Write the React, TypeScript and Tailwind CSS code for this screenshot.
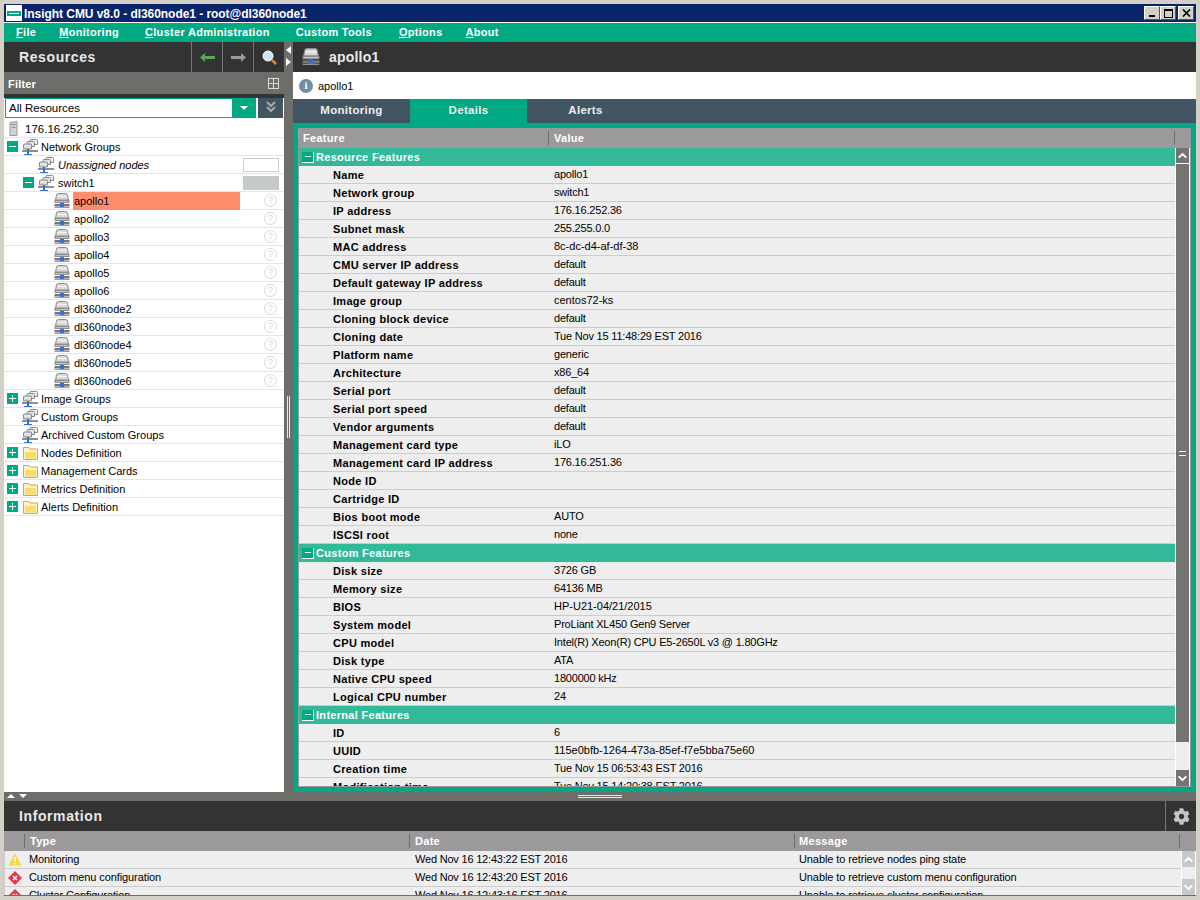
import { ChevronDown, ChevronUp } from "lucide-react";
import { FaCog } from "react-icons/fa";

const font = "font-['Liberation_Sans',Arial,sans-serif]";

function ServerIcon({ size = 16 }: { size?: number }) {
  return (
    <svg width={size} height={size} viewBox="0 0 16 16" className="shrink-0">
      <path d="M1.5 7 L2.5 2 Q2.8 0.5 4.5 0.5 H11.5 Q13.2 0.5 13.5 2 L14.5 7 Z" fill="#d9d9d9" stroke="#8a8a8a" />
      <rect x="3" y="3" width="10" height="1" fill="#f4f4f4" />
      <rect x="0.5" y="7" width="15" height="3" fill="#8d8d8d" />
      <rect x="1.5" y="8" width="13" height="1" fill="#c4c4c4" />
      <rect x="0.5" y="11" width="15" height="2.5" fill="#777777" />
      <rect x="6" y="10" width="4" height="5" fill="#2f6fe0" />
      <rect x="0.5" y="14" width="15" height="1" fill="#9a9a9a" />
    </svg>
  );
}

function GroupIcon() {
  return (
    <svg width="16" height="16" viewBox="0 0 16 16" className="shrink-0">
      <path d="M8 4 V1.5 Q8 0.5 9 0.5 H14.5 Q15.5 0.5 15.5 1.5 V5.5 H12" fill="#eeeeee" stroke="#8a8a8a" />
      <path d="M5 6 V3.5 Q5 2.5 6 2.5 H11.5 Q12.5 2.5 12.5 3.5 V7.5 H9" fill="#e2e2e2" stroke="#8a8a8a" />
      <path d="M1.5 10 V6 Q1.5 5 2.5 5 H8.5 Q9.5 5 9.5 6 V10 Z" fill="#d6d6d6" stroke="#8a8a8a" />
      <rect x="2.5" y="6.5" width="6" height="1" fill="#f6f6f6" />
      <rect x="0" y="11" width="16" height="2" fill="#8f8f8f" />
      <rect x="5" y="10" width="2" height="6" fill="#2f6fe0" />
      <rect x="2" y="15" width="8" height="1" fill="#2f6fe0" />
    </svg>
  );
}

function FolderIcon() {
  return (
    <svg width="15" height="14" viewBox="0 0 15 14" className="shrink-0">
      <path d="M0.5 3 V1.5 H6 L7 3 H14.5 V13.5 H0.5 Z" fill="#fff3c4" stroke="#e0a14a" />
      <rect x="2" y="6" width="11" height="6.5" fill="#fbdc6a" />
    </svg>
  );
}

function Toggle({ open }: { open: boolean }) {
  return (
    <span className="flex h-[11px] w-[11px] shrink-0 items-center justify-center bg-[#01a982]">
      <span className="relative block h-[7px] w-[7px]">
        <span className="absolute left-0 top-[3px] h-px w-[7px] bg-white" />
        {!open && <span className="absolute left-[3px] top-0 h-[7px] w-px bg-white" />}
      </span>
    </span>
  );
}

function Help() {
  return (
    <span className="ml-auto mr-[7px] flex h-[13px] w-[13px] shrink-0 items-center justify-center rounded-full border border-[#d8d8d8] text-[9px] leading-none text-[#d0d0d0]">
      ?
    </span>
  );
}

function TreeRow({ children }: { children: React.ReactNode }) {
  return <div className="flex h-[18px] items-center border-b border-[#e4e4e4]">{children}</div>;
}

function TopGroup({ label, open, folder }: { label: string; open?: boolean; folder?: boolean }) {
  return (
    <TreeRow>
      <span className="w-[3px]" />
      {open === undefined ? <span className="w-[11px]" /> : <Toggle open={open} />}
      <span className="ml-1 flex w-[19px] justify-start">{folder ? <span className="ml-[1px]"><FolderIcon /></span> : <GroupIcon />}</span>
      <span className="pt-[2px]">{label}</span>
    </TreeRow>
  );
}

function NodeRow({ name, selected }: { name: string; selected?: boolean }) {
  return (
    <TreeRow>
      <span className="ml-[50px] mr-[3px]">
        <ServerIcon />
      </span>
      <span className={selected ? "flex h-[18px] w-[167px] items-center bg-[#ff8d6d] pl-px pt-[2px]" : "pl-px pt-[2px]"}>{name}</span>
      <Help />
    </TreeRow>
  );
}

const sections: { title: string; rows: [string, string][] }[] = [
  {
    title: "Resource Features",
    rows: [
      ["Name", "apollo1"],
      ["Network group", "switch1"],
      ["IP address", "176.16.252.36"],
      ["Subnet mask", "255.255.0.0"],
      ["MAC address", "8c-dc-d4-af-df-38"],
      ["CMU server IP address", "default"],
      ["Default gateway IP address", "default"],
      ["Image group", "centos72-ks"],
      ["Cloning block device", "default"],
      ["Cloning date", "Tue Nov 15 11:48:29 EST 2016"],
      ["Platform name", "generic"],
      ["Architecture", "x86_64"],
      ["Serial port", "default"],
      ["Serial port speed", "default"],
      ["Vendor arguments", "default"],
      ["Management card type", "iLO"],
      ["Management card IP address", "176.16.251.36"],
      ["Node ID", ""],
      ["Cartridge ID", ""],
      ["Bios boot mode", "AUTO"],
      ["ISCSI root", "none"],
    ],
  },
  {
    title: "Custom Features",
    rows: [
      ["Disk size", "3726 GB"],
      ["Memory size", "64136 MB"],
      ["BIOS", "HP-U21-04/21/2015"],
      ["System model", "ProLiant XL450 Gen9 Server"],
      ["CPU model", "Intel(R) Xeon(R) CPU E5-2650L v3 @ 1.80GHz"],
      ["Disk type", "ATA"],
      ["Native CPU speed", "1800000 kHz"],
      ["Logical CPU number", "24"],
    ],
  },
  {
    title: "Internal Features",
    rows: [
      ["ID", "6"],
      ["UUID", "115e0bfb-1264-473a-85ef-f7e5bba75e60"],
      ["Creation time", "Tue Nov 15 06:53:43 EST 2016"],
      ["Modification time", "Tue Nov 15 14:20:38 EST 2016"],
    ],
  },
];

const messages: [string, string, string, "warn" | "error"][] = [
  ["Monitoring", "Wed Nov 16 12:43:22 EST 2016", "Unable to retrieve nodes ping state", "warn"],
  ["Custom menu configuration", "Wed Nov 16 12:43:20 EST 2016", "Unable to retrieve custom menu configuration", "error"],
  ["Cluster Configuration", "Wed Nov 16 12:43:16 EST 2016", "Unable to retrieve cluster configuration", "error"],
];

function StatusIcon({ kind }: { kind: "warn" | "error" }) {
  if (kind === "warn") {
    return (
      <svg width="14" height="13" viewBox="0 0 14 13" className="shrink-0">
        <path d="M7 0.5 L13.5 12.5 H0.5 Z" fill="#f8d640" />
        <rect x="6.4" y="4" width="1.4" height="5" fill="#fff" />
        <rect x="6.4" y="10" width="1.4" height="1.4" fill="#fff" />
      </svg>
    );
  }
  return (
    <svg width="14" height="14" viewBox="0 0 14 14" className="shrink-0">
      <path d="M7 0 L14 7 L7 14 L0 7 Z" fill="#e8384f" />
      <path d="M5 5 L9 9 M9 5 L5 9" stroke="#fff" strokeWidth="1.5" />
    </svg>
  );
}

function MenuItem({ first, rest, className }: { first: string; rest: string; className: string }) {
  return (
    <span className={`font-bold text-white ${className}`}>
      <span className="underline underline-offset-1">{first}</span>
      {rest}
    </span>
  );
}

export default function App() {
  return (
    <div className={`${font} flex h-[900px] w-[1200px] flex-col overflow-hidden border-x-4 border-t-4 border-[#d4d0c8] text-[11px] text-black`}>
      <div className="flex h-[18px] shrink-0 items-center bg-[#0a246a] pl-[2px] pr-[2px] text-white">
        <span className="mr-[2px] flex h-[16px] w-[16px] items-center justify-center bg-white">
          <span className="h-[5px] w-[14px] border-2 border-[#01a982]" />
        </span>
        <span className="pt-[2px] text-[12px] font-bold tracking-[-0.05px]">Insight CMU v8.0 - dl360node1 - root@dl360node1</span>
        <div className="ml-auto flex items-center">
          <span className="flex h-[14px] w-[16px] items-end justify-center border border-t-white border-l-white border-r-[#555] border-b-[#555] bg-[#d4d0c8] pb-[2px]"><span className="h-[2px] w-[6px] bg-black" /></span>
          <span className="flex h-[14px] w-[16px] items-center justify-center border border-t-white border-l-white border-r-[#555] border-b-[#555] bg-[#d4d0c8]"><span className="h-[9px] w-[9px] border border-t-2 border-black" /></span>
          <span className="ml-[2px] flex h-[14px] w-[16px] items-center justify-center border border-t-white border-l-white border-r-[#555] border-b-[#555] bg-[#d4d0c8]">
            <svg width="9" height="8" viewBox="0 0 9 8"><path d="M1 0.5 L8 7.5 M8 0.5 L1 7.5" stroke="#000" strokeWidth="1.6" /></svg>
          </span>
        </div>
      </div>
      <div className="mt-px flex h-[19px] shrink-0 items-center bg-[#01a982] pl-3 tracking-[0.3px]">
        <MenuItem first="F" rest="ile" className="" />
        <MenuItem first="M" rest="onitoring" className="ml-[23px]" />
        <MenuItem first="C" rest="luster Administration" className="ml-[26px]" />
        <MenuItem first="" rest="Custom Tools" className="ml-[26px]" />
        <MenuItem first="O" rest="ptions" className="ml-[27px]" />
        <MenuItem first="A" rest="bout" className="ml-[23px]" />
      </div>

      <div className="flex min-h-0 flex-1">
        <div className="flex w-[280px] shrink-0 flex-col bg-white">
          <div className="flex h-[30px] shrink-0 items-center bg-[#333333]">
            <span className="ml-[15px] text-[14px] font-bold tracking-[0.6px] text-[#e8e8e8]">Resources</span>
            <div className="ml-auto flex h-full">
              <span className="flex w-[31px] items-center justify-center border-l border-[#777]">
                <svg width="15" height="9" viewBox="0 0 15 9"><path d="M0 4.5 L5 0 V3 H15 V6 H5 V9 Z" fill="#5aa55a" /></svg>
              </span>
              <span className="flex w-[31px] items-center justify-center border-l border-[#777]">
                <svg width="15" height="9" viewBox="0 0 15 9"><path d="M15 4.5 L10 0 V3 H0 V6 H10 V9 Z" fill="#9a9a9a" /></svg>
              </span>
              <span className="flex w-[31px] items-center justify-center border-l border-[#777]">
                <svg width="15" height="15" viewBox="0 0 15 15">
                  <path d="M10 10 L14 14" stroke="#d8893a" strokeWidth="2.5" />
                  <circle cx="6" cy="6" r="5" fill="#cfe3f5" stroke="#ffffff" />
                </svg>
              </span>
            </div>
          </div>
          <div className="flex h-[22px] shrink-0 items-center justify-between bg-[#6d6e6a] pl-[4px] pr-[5px] font-bold text-white">
            <span className="pt-[2px] tracking-[0.2px]">Filter</span>
            <span className="relative h-[11px] w-[11px] border border-[#ddd]">
              <span className="absolute left-0 top-[4px] h-px w-[9px] bg-[#ddd]" />
              <span className="absolute left-[4px] top-0 h-[9px] w-px bg-[#ddd]" />
            </span>
          </div>
          <div className="flex h-[4px] shrink-0 bg-[#333333]" />
          <div className="flex h-[20px] shrink-0 items-stretch gap-[2px] pl-px pr-px">
            <div className="flex flex-1 border border-[#01a982]">
              <span className="flex flex-1 items-center pl-[3px] pt-[2px] text-[11.5px]">All Resources</span>
              <span className="flex w-[23px] items-center justify-center bg-[#01a982]">
                <span className="h-0 w-0 border-x-4 border-t-4 border-x-transparent border-t-white" />
              </span>
            </div>
            <span className="flex w-[25px] items-center justify-center bg-[#425563]">
              <svg width="10" height="14" viewBox="0 0 10 14">
                <path d="M1 1 L5 5 L9 1 M1 6 L5 10 L9 6" fill="none" stroke="#a8a8a8" strokeWidth="2" />
              </svg>
            </span>
          </div>
          <div className="mt-[2px] shrink-0 text-[11px]">
            <TreeRow>
              <svg width="11" height="15" viewBox="0 0 11 15" className="ml-[4px] mr-[6px] shrink-0">
                <path d="M2 1.5 L9 0.5 V14.5 H2 Z" fill="#d0d0d0" stroke="#999" />
                <rect x="3.5" y="3" width="4" height="1" fill="#888" />
                <rect x="3.5" y="6" width="4" height="1" fill="#6ab06a" />
              </svg>
              <span className="pt-[2px] text-[11.5px]">176.16.252.30</span>
            </TreeRow>
            <TopGroup label="Network Groups" open />
            <TreeRow>
              <span className="ml-[34px] mr-[4px]"><GroupIcon /></span>
              <span className="pt-[2px] italic">Unassigned nodes</span>
              <span className="ml-auto mr-[5px] h-[14px] w-[36px] border border-[#ccc] bg-white" />
            </TreeRow>
            <TreeRow>
              <span className="ml-[19px] mr-[4px]"><Toggle open /></span>
              <GroupIcon />
              <span className="ml-[4px] pt-[2px]">switch1</span>
              <span className="ml-auto mr-[5px] h-[14px] w-[36px] bg-[#c6c9ca]" />
            </TreeRow>
            <NodeRow name="apollo1" selected />
            {["apollo2", "apollo3", "apollo4", "apollo5", "apollo6", "dl360node2", "dl360node3", "dl360node4", "dl360node5", "dl360node6"].map((n) => (
              <NodeRow key={n} name={n} />
            ))}
            <TopGroup label="Image Groups" open={false} />
            <TopGroup label="Custom Groups" />
            <TopGroup label="Archived Custom Groups" />
            <TopGroup label="Nodes Definition" open={false} folder />
            <TopGroup label="Management Cards" open={false} folder />
            <TopGroup label="Metrics Definition" open={false} folder />
            <TopGroup label="Alerts Definition" open={false} folder />
          </div>
        </div>

        <div className="relative flex w-[9px] shrink-0 flex-col items-center bg-[#6d6e6a] pt-[4px] text-white">
          <span className="h-0 w-0 border-y-[4px] border-r-[5px] border-y-transparent border-r-white" />
          <span className="mt-[4px] h-0 w-0 border-y-[4px] border-l-[5px] border-y-transparent border-l-white" />
          <span className="absolute top-[354px] h-[42px] w-[3px] border-x border-[#e8e8e8]" />
        </div>

        <div className="flex min-w-0 flex-1 flex-col">
          <div className="flex h-[30px] shrink-0 items-center bg-[#333333] pl-[9px]">
            <ServerIcon size={18} />
            <span className="ml-[9px] text-[14px] font-bold tracking-[0.2px] text-[#e8e8e8]">apollo1</span>
          </div>
          <div className="flex h-[27px] shrink-0 items-center bg-white pl-[6px]">
            <span className="flex h-[14px] w-[14px] items-center justify-center rounded-full bg-[#6f8ea8] font-['Liberation_Serif',serif] text-[11px] font-bold leading-none text-white">i</span>
            <span className="ml-[5px] pt-[2px]">apollo1</span>
          </div>
          <div className="flex h-[24px] shrink-0 bg-[#425563] text-[11.5px] font-bold tracking-[0.3px] text-[#eeeeee]">
            <span className="flex w-[117px] items-center justify-center">Monitoring</span>
            <span className="flex w-[117px] items-center justify-center bg-[#01a982]">Details</span>
            <span className="flex w-[117px] items-center justify-center">Alerts</span>
          </div>
          <div className="flex min-h-0 flex-1 flex-col bg-[#01a982] p-[5px]">
            <div className="flex h-[20px] shrink-0 items-center bg-[#9b999b] font-bold leading-[14px] tracking-[0.3px] text-white">
              <span className="w-[250px] pl-[5px]">Feature</span>
              <span className="h-[14px] border-l border-[#6d6e6a] pl-[5px]">Value</span>
              <span className="ml-auto mr-[16px] h-[14px] border-l border-[#6d6e6a]" />
            </div>
            <div className="flex min-h-0 flex-1 overflow-hidden border-x border-b border-x-[#9b999b] border-b-[#9b999b] bg-[#eeeeee]">
              <div className="min-w-0 flex-1 overflow-hidden">
                {sections.map((s) => (
                  <div key={s.title}>
                    <div className="flex h-[18px] items-center bg-[#32b99a] pl-[3px] font-bold tracking-[0.3px] text-white">
                      <span className="mr-[2px] flex h-[11px] w-[12px] items-center justify-center border-b border-r border-white bg-[#01a982]">
                        <span className="h-px w-[6px] bg-white" />
                      </span>
                      {s.title}
                    </div>
                    {s.rows.map(([k, v]) => (
                      <div key={k} className="flex h-[18px] items-center border-b border-[#cccccc]">
                        <span className="w-[255px] pl-[34px] pt-[2px] font-bold tracking-[0.3px]">{k}</span>
                        <span className={v.includes("-") && !v.includes(" ") ? "tracking-normal" : "tracking-[-0.2px]"}>{v}</span>
                      </div>
                    ))}
                  </div>
                ))}
              </div>
              <div className="flex w-[15px] shrink-0 flex-col border-x border-white bg-[#eeeeee]">
                <span className="flex h-[16px] shrink-0 items-center justify-center border-b border-white bg-[#737570] text-white">
                  <ChevronUp size={13} strokeWidth={3.5} />
                </span>
                <span className="flex h-[578px] shrink-0 items-center justify-center bg-[#737570]">
                  <span className="h-[5px] w-[7px] border-y border-white" />
                </span>
                <span className="flex-1" />
                <span className="flex h-[16px] shrink-0 items-center justify-center bg-[#737570] text-white">
                  <ChevronDown size={13} strokeWidth={3.5} />
                </span>
              </div>
            </div>
          </div>
        </div>
      </div>

      <div className="relative flex h-[9px] shrink-0 items-center justify-center bg-[#6d6e6a]">
        <span className="absolute left-[3px] top-[2px] h-0 w-0 border-x-[4px] border-b-[4px] border-x-transparent border-b-white" />
        <span className="absolute left-[15px] top-[2px] h-0 w-0 border-x-[4px] border-t-[4px] border-x-transparent border-t-white" />
        <span className="h-[3px] w-[44px] border-y border-[#e8e8e8]" />
      </div>
      <div className="flex h-[30px] shrink-0 items-center bg-[#333333] pl-[15px]">
        <span className="text-[14px] font-bold tracking-[0.6px] text-[#e8e8e8]">Information</span>
        <span className="ml-auto flex h-full w-[31px] items-center justify-center border-l border-[#777] text-[#c4c4c4]">
          <FaCog size={17} />
        </span>
      </div>
      <div className="flex h-[20px] shrink-0 items-center bg-[#9b999b] font-bold leading-[14px] tracking-[0.3px] text-white">
        <span className="h-[14px] w-[21px] border-r border-[#6d6e6a]" />
        <span className="h-[14px] w-[385px] border-r border-[#6d6e6a] pl-[5px]">Type</span>
        <span className="h-[14px] w-[385px] border-r border-[#6d6e6a] pl-[5px]">Date</span>
        <span className="h-[14px] w-[385px] border-r border-[#6d6e6a] pl-[4px]">Message</span>
      </div>
      <div className="flex h-[44px] shrink-0 overflow-hidden border-l border-[#cccccc] bg-[#eeeeee]">
        <div className="min-w-0 flex-1">
          {messages.map(([type, date, msg, kind]) => (
            <div key={type} className="flex h-[18px] items-center border-b border-[#cccccc] tracking-[-0.1px]">
              <span className="flex w-[24px] shrink-0 justify-center pr-[4px]"><StatusIcon kind={kind} /></span>
              <span className="w-[386px] shrink-0">{type}</span>
              <span className="w-[384px] shrink-0 tracking-[-0.2px]">{date}</span>
              <span>{msg}</span>
            </div>
          ))}
        </div>
        <div className="flex w-[15px] shrink-0 flex-col border-x border-white">
          <span className="flex h-[16px] items-center justify-center bg-[#c6c9ca] text-white"><ChevronUp size={13} strokeWidth={3.5} /></span>
          <span className="flex-1" />
          <span className="flex h-[16px] items-center justify-center bg-[#c6c9ca] text-white"><ChevronDown size={13} strokeWidth={3.5} /></span>
        </div>
      </div>
      <div className="h-px shrink-0 bg-[#6d6e6a]" />
      <div className="h-[4px] shrink-0 bg-[#d4d0c8]" />
    </div>
  );
}
